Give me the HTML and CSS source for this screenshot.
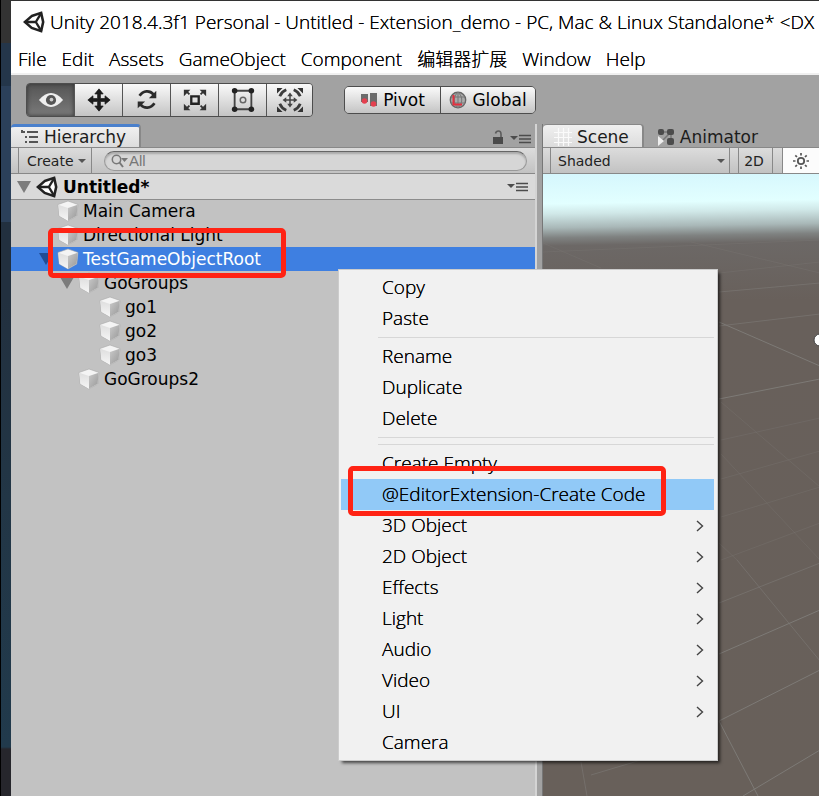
FILE: index.html
```html
<!DOCTYPE html>
<html lang="en">
<head>
<meta charset="utf-8">
<title>Unity 2018.4.3f1 Personal</title>
<link rel="stylesheet" href="styles.css">
</head>
<body>
<svg class="defs" aria-hidden="true">
  <defs>
    <linearGradient id="cube-left" x1="0" y1="0" x2="0" y2="1"><stop offset="0" stop-color="#dedede"/><stop offset="1" stop-color="#f6f6f6"/></linearGradient>
    <linearGradient id="cube-right" x1="0" y1="0" x2="1" y2="1"><stop offset="0" stop-color="#c9c9c9"/><stop offset="1" stop-color="#989898"/></linearGradient>
    <symbol id="cube" viewBox="0 0 22 22">
      <path d="M11 1 21 4.500 19.800 16 11 21 2.200 16 1 4.500Z" fill="#f4f4f4" stroke="#a8a8a8" stroke-width=".6"/>
      <path d="M1.300 4.800 11 8V20.700L2.400 15.800Z" fill="url(#cube-left)"/>
      <path d="M20.700 4.800 11 8V20.700L19.600 15.800Z" fill="url(#cube-right)"/>
    </symbol>
    <symbol id="unity" viewBox="0 0 24 24">
      <path d="M9.500 5.500 19.800 2 22 12 19.800 22 9.500 18.500 2 12Z" fill="#fff" stroke="#222" stroke-width="2.800" stroke-linejoin="miter"/>
      <path d="M2 12H14M14 12 20 2M14 12 20 22" fill="none" stroke="#222" stroke-width="2.600"/>
    </symbol>
    <symbol id="options" viewBox="0 0 22 10">
      <path d="M0 2H8L4 6Z" fill="#4c4c4c"/>
      <path d="M9 1.500H21M9 5H21M9 8.500H21" stroke="#4c4c4c" stroke-width="1.300"/>
    </symbol>
    <symbol id="chevron" viewBox="0 0 8 12"><path d="M1 1 6.500 6 1 11" fill="none" stroke="#444" stroke-width="1.400"/></symbol>
  </defs>
</svg>
<div class="window">
  <header class="titlebar">
    <svg class="logo"><use href="#unity"/></svg>
    <span>Unity 2018.4.3f1 Personal - Untitled - Extension_demo - PC, Mac &amp; Linux Standalone* &lt;DX</span>
  </header>
  <nav class="menubar">
    <button>File</button><button>Edit</button><button>Assets</button><button>GameObject</button><button>Component</button><button class="cjk">编辑器扩展</button><button>Window</button><button>Help</button>
  </nav>
  <div class="toolbar">
    <div class="tools">
      <button class="tool active" aria-label="View"><svg viewBox="0 0 28 28"><path d="M1 14Q14-1 27 14Q14 29 1 14Z" fill="#eee"/><circle cx="14" cy="14" r="5.500" fill="#555"/><circle cx="14.500" cy="13.500" r="2" fill="#ccc"/></svg></button>
      <button class="tool" aria-label="Move"><svg viewBox="0 0 28 28"><path d="M14 2 18.500 7.500H15.500V12.500H20.500V9.500L26 14 20.500 18.500V15.500H15.500V20.500H18.500L14 26 9.500 20.500H12.500V15.500H7.500V18.500L2 14 7.500 9.500V12.500H12.500V7.500H9.500Z" fill="#1c1c1c" stroke="#1c1c1c" stroke-width=".8"/></svg></button>
      <button class="tool" aria-label="Rotate"><svg viewBox="0 0 28 28"><path d="M6 9.500C10 3.500 17 3.500 21 8M22 17.500C18 23.500 11 23.500 7 19" fill="none" stroke="#2b2b2b" stroke-width="3"/><path d="M24 4V12H16ZM4 23V15.500H12Z" fill="#2b2b2b"/></svg></button>
      <button class="tool" aria-label="Scale"><svg viewBox="0 0 28 28"><path d="M10 10H18V18H10Z" fill="none" stroke="#222" stroke-width="2.500"/><path d="M8 8 4 4M20 8 24 4M8 20 4 24M20 20 24 24" stroke="#333" stroke-width="2"/><path d="M2 3H9L2 10ZM26 3H19L26 10ZM2 25H9L2 18ZM26 25H19L26 18Z" fill="#333"/></svg></button>
      <button class="tool" aria-label="Rect"><svg viewBox="0 0 28 28"><path d="M5 4H23V24H5Z" fill="none" stroke="#444" stroke-width="2"/><g fill="#222"><circle cx="5" cy="4" r="3"/><circle cx="23" cy="4" r="3"/><circle cx="5" cy="24" r="3"/><circle cx="23" cy="24" r="3"/></g><circle cx="14" cy="14" r="3" fill="none" stroke="#666" stroke-width="1.600"/></svg></button>
      <button class="tool" aria-label="Transform"><svg viewBox="0 0 28 28"><path d="M0 1H6L0 7ZM28 1H22L28 7ZM0 27H6L0 21ZM28 27H22L28 21Z" fill="#333"/><path d="M3 10Q5 5 10 3M18 3Q23 5 25 10M25 18Q23 23 18 25M10 25Q5 23 3 18" fill="none" stroke="#3c3c3c" stroke-width="3"/><path d="M14 8V20M8 14H20" stroke="#444" stroke-width="1.600"/><path d="M14 6 17 10H11ZM14 22 17 18H11ZM6 14 10 11V17ZM22 14 18 11V17Z" fill="#444"/></svg></button>
    </div>
    <div class="handles">
      <button class="handle"><svg viewBox="0 0 18 18"><path d="M1 3H8V11H1ZM10 2H17V15H10Z" fill="#6b6b6b"/><circle cx="4.500" cy="10" r="2.800" fill="#e4404f"/><circle cx="13.500" cy="13" r="2.800" fill="#e4404f"/></svg>Pivot</button>
      <button class="handle"><svg viewBox="0 0 18 18"><circle cx="9" cy="9" r="7.700" fill="#aaa" stroke="#666" stroke-width="1.400"/><path d="M2 6H16M2 12H16M9 1C4 6 4 12 9 17M9 1C14 6 14 12 9 17M9 1V17" fill="none" stroke="#777"/><path d="M4.500 4V13.500H13" fill="none" stroke="#e4303f" stroke-width="2"/></svg>Global</button>
    </div>
  </div>
  <main class="workspace">
    <section class="hierarchy">
      <div class="tabs">
        <button class="tab focused"><svg class="tab-list" viewBox="0 0 18 14"><path d="M1 0V3M1 2H4M4 7H6M4 12H6" fill="none" stroke="#555" stroke-width="2"/><path d="M6 2H17M8 7H17M8 12H17" stroke="#555" stroke-width="2"/></svg>Hierarchy</button>
        <div class="tab-controls">
          <svg class="lock" viewBox="0 0 12 15"><path d="M1 7H11V14H1Z" fill="#4a4a4a"/><path d="M3.500 3.500Q4 1 6.500 1Q9 1 9 4V7" fill="none" stroke="#5c5c5c" stroke-width="1.600"/></svg>
          <svg class="options"><use href="#options"/></svg>
        </div>
      </div>
      <div class="subbar">
        <button class="create">Create<i class="caret"></i></button>
        <label class="search"><svg viewBox="0 0 18 14"><circle cx="5.500" cy="5.500" r="4.200" fill="none" stroke="#777" stroke-width="1.500"/><path d="M8.500 8.500 12 13" stroke="#777" stroke-width="2"/><path d="M10 4H17L13.500 8Z" fill="#777"/></svg><input type="text" placeholder="All" aria-label="Search hierarchy"></label>
      </div>
      <div class="scene-row"><i class="fold"></i><svg class="logo"><use href="#unity"/></svg><b>Untitled*</b><svg class="options"><use href="#options"/></svg></div>
      <ul class="tree">
        <li class="row level-1"><svg class="cube"><use href="#cube"/></svg>Main Camera</li>
        <li class="row level-1"><svg class="cube"><use href="#cube"/></svg>Directional Light</li>
        <li class="row level-1 selected"><i class="fold"></i><svg class="cube"><use href="#cube"/></svg>TestGameObjectRoot</li>
        <li class="row level-2"><i class="fold"></i><svg class="cube"><use href="#cube"/></svg>GoGroups</li>
        <li class="row level-3"><svg class="cube"><use href="#cube"/></svg>go1</li>
        <li class="row level-3"><svg class="cube"><use href="#cube"/></svg>go2</li>
        <li class="row level-3"><svg class="cube"><use href="#cube"/></svg>go3</li>
        <li class="row level-2"><svg class="cube"><use href="#cube"/></svg>GoGroups2</li>
      </ul>
    </section>
    <section class="scene">
      <div class="tabs">
        <button class="tab"><svg class="tab-grid" viewBox="0 0 18 18"><path d="M4.500 0V18M9.500 0V18M14.500 0V18M0 4.500H18M0 9.500H18M0 14.500H18" stroke="#fafafa" stroke-width="1.200"/></svg>Scene</button>
        <button class="tab idle"><svg class="tab-anim" viewBox="0 0 18 18"><path d="M4 4H14V14M4 14 14 4" fill="none" stroke="#777" stroke-width="1.500"/><g fill="#4c4c4c"><rect x="1" y="1" width="6" height="6" rx="2"/><rect x="10" y="1" width="7" height="6" rx="2"/><rect x="10" y="10" width="7" height="7" rx="2"/></g><path d="M1 8 7 13 1 18Z" fill="#eee"/></svg>Animator</button>
      </div>
      <div class="subbar">
        <button class="shading">Shaded<i class="caret"></i></button>
        <button class="two-d">2D</button>
        <button class="light" aria-label="Scene lighting"><svg viewBox="0 0 18 18"><circle cx="9" cy="9" r="3.200" fill="none" stroke="#555" stroke-width="1.800"/><path d="M9 1V3.500M9 14.500V17M1 9H3.500M14.500 9H17M3.300 3.300 5 5M13 13 14.700 14.700M3.300 14.700 5 13M13 5 14.700 3.300" stroke="#555" stroke-width="1.700"/></svg></button>
      </div>
      <div class="viewport">
        <svg class="grid" viewBox="542 174 277 622" preserveAspectRatio="xMinYMin slice">
          <g fill="none" stroke="#7d7a76" stroke-width="1">
            <path d="M718 322 819 366M718 399 819 379M718 721 819 670M718 721 757 796M742 796 819 750M718 654 819 610"/>
            <path opacity=".6" d="M718 326 819 314M718 292 819 283M736 560 819 661M718 603 819 563M580 762 586 796M590 775 640 760"/>
            <path opacity=".3" d="M542 243 600 268M542 252 819 240M690 242 819 273M720 402 819 487M720 454 819 560M720 440 819 418M720 479 819 451M720 517 819 487M720 560 819 523M718 543 736 560M718 273 819 262"/>
          </g>
          <circle cx="819" cy="340" r="6" fill="#fff" stroke="#444" stroke-width="1"/>
        </svg>
      </div>
    </section>
  </main>
</div>
<div class="context-menu" role="menu">
  <button role="menuitem">Copy</button>
  <button role="menuitem">Paste</button>
  <hr>
  <button role="menuitem">Rename</button>
  <button role="menuitem">Duplicate</button>
  <button role="menuitem">Delete</button>
  <hr>
  <hr>
  <button role="menuitem">Create Empty</button>
  <button role="menuitem" class="hover">@EditorExtension-Create Code</button>
  <button role="menuitem">3D Object<svg><use href="#chevron"/></svg></button>
  <button role="menuitem">2D Object<svg><use href="#chevron"/></svg></button>
  <button role="menuitem">Effects<svg><use href="#chevron"/></svg></button>
  <button role="menuitem">Light<svg><use href="#chevron"/></svg></button>
  <button role="menuitem">Audio<svg><use href="#chevron"/></svg></button>
  <button role="menuitem">Video<svg><use href="#chevron"/></svg></button>
  <button role="menuitem">UI<svg><use href="#chevron"/></svg></button>
  <button role="menuitem">Camera</button>
</div>
<div class="mark mark-object"></div>
<div class="mark mark-command"></div>
</body>
</html>
```
FILE: styles.css
```css
* { box-sizing: border-box; }
body {
  margin: 0;
  height: 100vh;
  overflow: hidden;
  position: relative;
  display: flex;
  padding: 1px 0 0 11px;
  background: linear-gradient(90deg, #000 1px, transparent 1px),
    linear-gradient(#333 0 43px, #24364a 43px 86px, #2b405a 86px 222px, #22303f 222px 300px, #223646 500px, #213a4c 747px, #26262c 749px);
  color: #000;
  font: 17px/24px "DejaVu Sans", sans-serif;
}
button { margin: 0; padding: 0; border: 0; background: none; color: inherit; font: inherit; text-shadow: inherit; white-space: nowrap; }
svg { display: block; flex: none; }
.defs { position: absolute; width: 0; height: 0; }
.window { flex: 1; min-width: 0; display: flex; flex-direction: column; background: #a2a2a2; }

/* The zero-blur shadow darkens the thin strokes of the light face. */
.titlebar, .menubar, .context-menu { font-family: "Open Sans", "Noto Sans CJK SC", sans-serif; font-size: 19px; font-weight: 300; text-shadow: 0 0 0 #000; }
.titlebar { height: 42px; display: flex; align-items: center; gap: 5px; padding-left: 12px; background: #fff; white-space: nowrap; overflow: hidden; }
.logo { width: 22px; height: 22px; }
.menubar { height: 32px; display: flex; align-items: center; gap: 15px; padding: 1px 0 0 7px; background: #fff; border-bottom: 2px solid #f0f0f0; }
.menubar .cjk { font-size: 18px; }

.toolbar { height: 49px; display: flex; align-items: center; gap: 31px; padding-left: 15px; }
.tools { display: flex; border: 1px solid #4d4d4d; border-radius: 4px; overflow: hidden; }
.tool { width: 48px; height: 32px; display: grid; place-items: center; background: linear-gradient(#fafafa, #c4c4c4); border-left: 1px solid #555; }
.tool:first-child { width: 47px; border-left: 0; }
.tool:last-child { width: 46px; }
.tool.active { background: linear-gradient(#555, #7a7a7a); box-shadow: inset 0 0 4px #333; }
.tool svg { width: 26px; height: 26px; }
.handles { display: flex; border: 1px solid #4d4d4d; border-radius: 5px; overflow: hidden; }
.handle { width: 95px; height: 26px; display: flex; align-items: center; justify-content: center; gap: 5px; background: linear-gradient(#fafafa, #c4c4c4); }
.handle + .handle { border-left: 1px solid #4d4d4d; }
.handle svg { width: 18px; height: 18px; }

.workspace { flex: 1; min-height: 0; display: flex; gap: 5px; }
.hierarchy { width: 526px; display: flex; flex-direction: column; background: #c2c2c2; border-right: 2px solid #d4d4d4; }
.scene { flex: 1; min-width: 0; display: flex; flex-direction: column; border-left: 1px solid #777; }
.tabs { height: 24px; display: flex; background: #a2a2a2; border-bottom: 1px solid #888; color: #1c1c1c; }
.tab { display: flex; align-items: center; gap: 5px; padding: 2px 13px 0 11px; background: linear-gradient(#f0f0f0, #dcdcdc); border-top: 1px solid #888; border-right: 2px solid #888; border-radius: 4px 4px 0 0; }
.tab.focused { padding: 0 13px 0 10px; border-top: 3px solid #4a80cc; }
.tab.idle { padding-left: 13px; background: none; border-color: transparent; }
.tab-list { width: 18px; height: 14px; }
.tab-grid, .tab-anim { width: 18px; height: 18px; }
.tab-controls { margin-left: auto; display: flex; align-items: flex-end; gap: 6px; padding: 0 3px 2px; }
.lock { width: 12px; height: 15px; }
.options { width: 22px; height: 10px; }
.tab-controls .options { margin-bottom: 1px; }
.subbar { height: 26px; display: flex; align-items: center; padding-left: 7px; background: linear-gradient(#dcdcdc, #c2c2c2); border-bottom: 1px solid #888; font-size: 14px; color: #222; }
.subbar button { height: 100%; display: flex; align-items: center; border: solid #888; border-width: 0 1px; }
.caret { border: 4px solid transparent; border-top-color: #555; border-bottom: 0; }
.subbar .create { width: 74px; padding: 0 5px 0 8px; justify-content: space-between; }
.search { flex: 1; height: 20px; margin: 0 8px 0 12px; display: flex; align-items: center; padding-left: 6px; border: 1px solid #999; border-top-color: #666; border-radius: 10px; background: #d6d6d6; box-shadow: inset 0 2px 2px #aaa; }
.search svg { width: 18px; height: 14px; }
.search input { flex: 1; min-width: 0; height: 18px; padding: 0; border: 0; outline: 0; background: none; font: 15px/18px "Liberation Sans", sans-serif; }
.search input::placeholder { color: #777; opacity: 1; }

.scene-row { height: 25px; display: flex; align-items: center; gap: 5px; padding: 0 6px; background: #dadada; box-shadow: 0 1px #8c8c8c; z-index: 1; }
.scene-row .options { margin-left: auto; }
.fold { flex: none; border: 7px solid transparent; border-top: 12px solid #7c7c7c; border-bottom: 0; }
.tree { margin: 0; padding: 0; list-style: none; }
.row { height: 24px; display: flex; align-items: center; gap: 4px; }
.cube { width: 22px; height: 22px; }
.level-1 { padding-left: 46px; }
.level-2 { padding-left: 67px; }
.level-3 { padding-left: 88px; }
.row .fold { margin-left: -18px; }
.selected { background: #3e7fe1; color: #fff; }
.selected .fold { border-top-color: #214c94; }

.subbar .shading { width: 180px; padding: 0 4px 0 7px; justify-content: space-between; }
.subbar .two-d { width: 35px; margin: 0 9px 0 8px; padding-right: 3px; justify-content: center; }
.subbar .light { flex: 1; padding-left: 9px; background: #fcfcfc; border-right: 0; }
.light svg { width: 18px; height: 18px; }
.viewport { flex: 1; min-height: 0; overflow: hidden; background: linear-gradient(179deg, #d6f7fd 2px, #e2ffff 30px, #d0e8e8 40px, #a9b8b8 54px, #7f8281 64px, #6c6866 72px, #68605b 130px, #68605a); }
.grid { width: 100%; height: 100%; }

.context-menu { position: absolute; left: 338px; top: 269px; width: 380px; padding: 2px 3px 2px 2px; display: flex; flex-direction: column; background: #f1f1f1; border: 1px solid #ccc; box-shadow: 3px 3px 3px -1px rgba(0, 0, 0, .65); }
.context-menu button { height: 31px; display: flex; align-items: center; justify-content: space-between; padding: 0 10px 2px 41px; text-align: left; }
.context-menu .hover { background: #91c9f7; }
.context-menu svg { width: 8px; height: 12px; margin-top: 2px; }
.context-menu hr { width: calc(100% - 37px); height: 1px; margin: 3px 0 3px 37px; border: 0; background: #d7d7d7; }
.mark { position: absolute; height: 50px; border: 5px solid #ff2314; border-radius: 5px; pointer-events: none; }
.mark-object { left: 48px; top: 228px; width: 238px; }
.mark-command { left: 348px; top: 466px; width: 318px; }
```
